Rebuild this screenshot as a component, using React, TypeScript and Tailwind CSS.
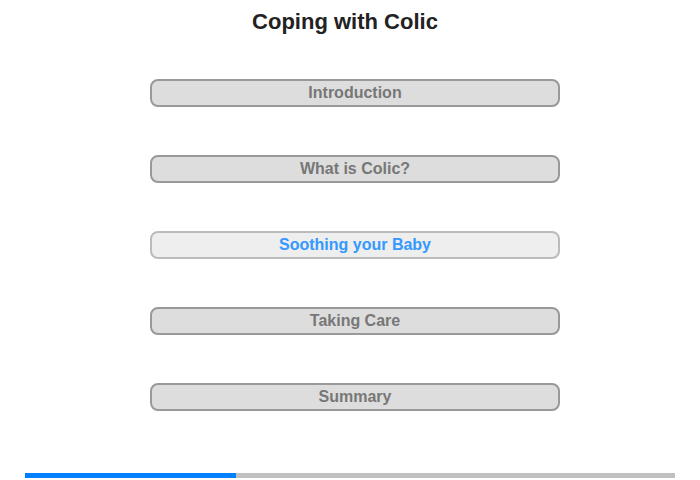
import React from "react";

const sections = [
  { label: "Introduction", active: false },
  { label: "What is Colic?", active: false },
  { label: "Soothing your Baby", active: true },
  { label: "Taking Care", active: false },
  { label: "Summary", active: false },
];

export default function App() {
  return (
    <div className="w-[700px] h-[480px] bg-white flex flex-col items-center font-['Liberation_Sans',Arial,sans-serif]">
      <h1 className="mt-[9px] mr-[10px] text-[22px] leading-[26px] font-bold text-[#222]">
        Coping with Colic
      </h1>
      <div className="mt-[44px] ml-[10px] flex flex-col gap-[48px]">
        {sections.map((s) => (
          <button
            key={s.label}
            className={
              s.active
                ? "w-[410px] h-[28px] rounded-[8px] border-2 border-[#bbb] bg-[#eee] text-[#3399ff] text-[16px] font-bold leading-none"
                : "w-[410px] h-[28px] rounded-[8px] border-2 border-[#999] bg-[#ddd] text-[#777] text-[16px] font-bold leading-none"
            }
          >
            {s.label}
          </button>
        ))}
      </div>
      <div className="mt-[62px] w-[650px] h-[5px] bg-[#c0c0c0] flex">
        <div className="w-[211px] h-full bg-[#0080ff]" />
      </div>
    </div>
  );
}
